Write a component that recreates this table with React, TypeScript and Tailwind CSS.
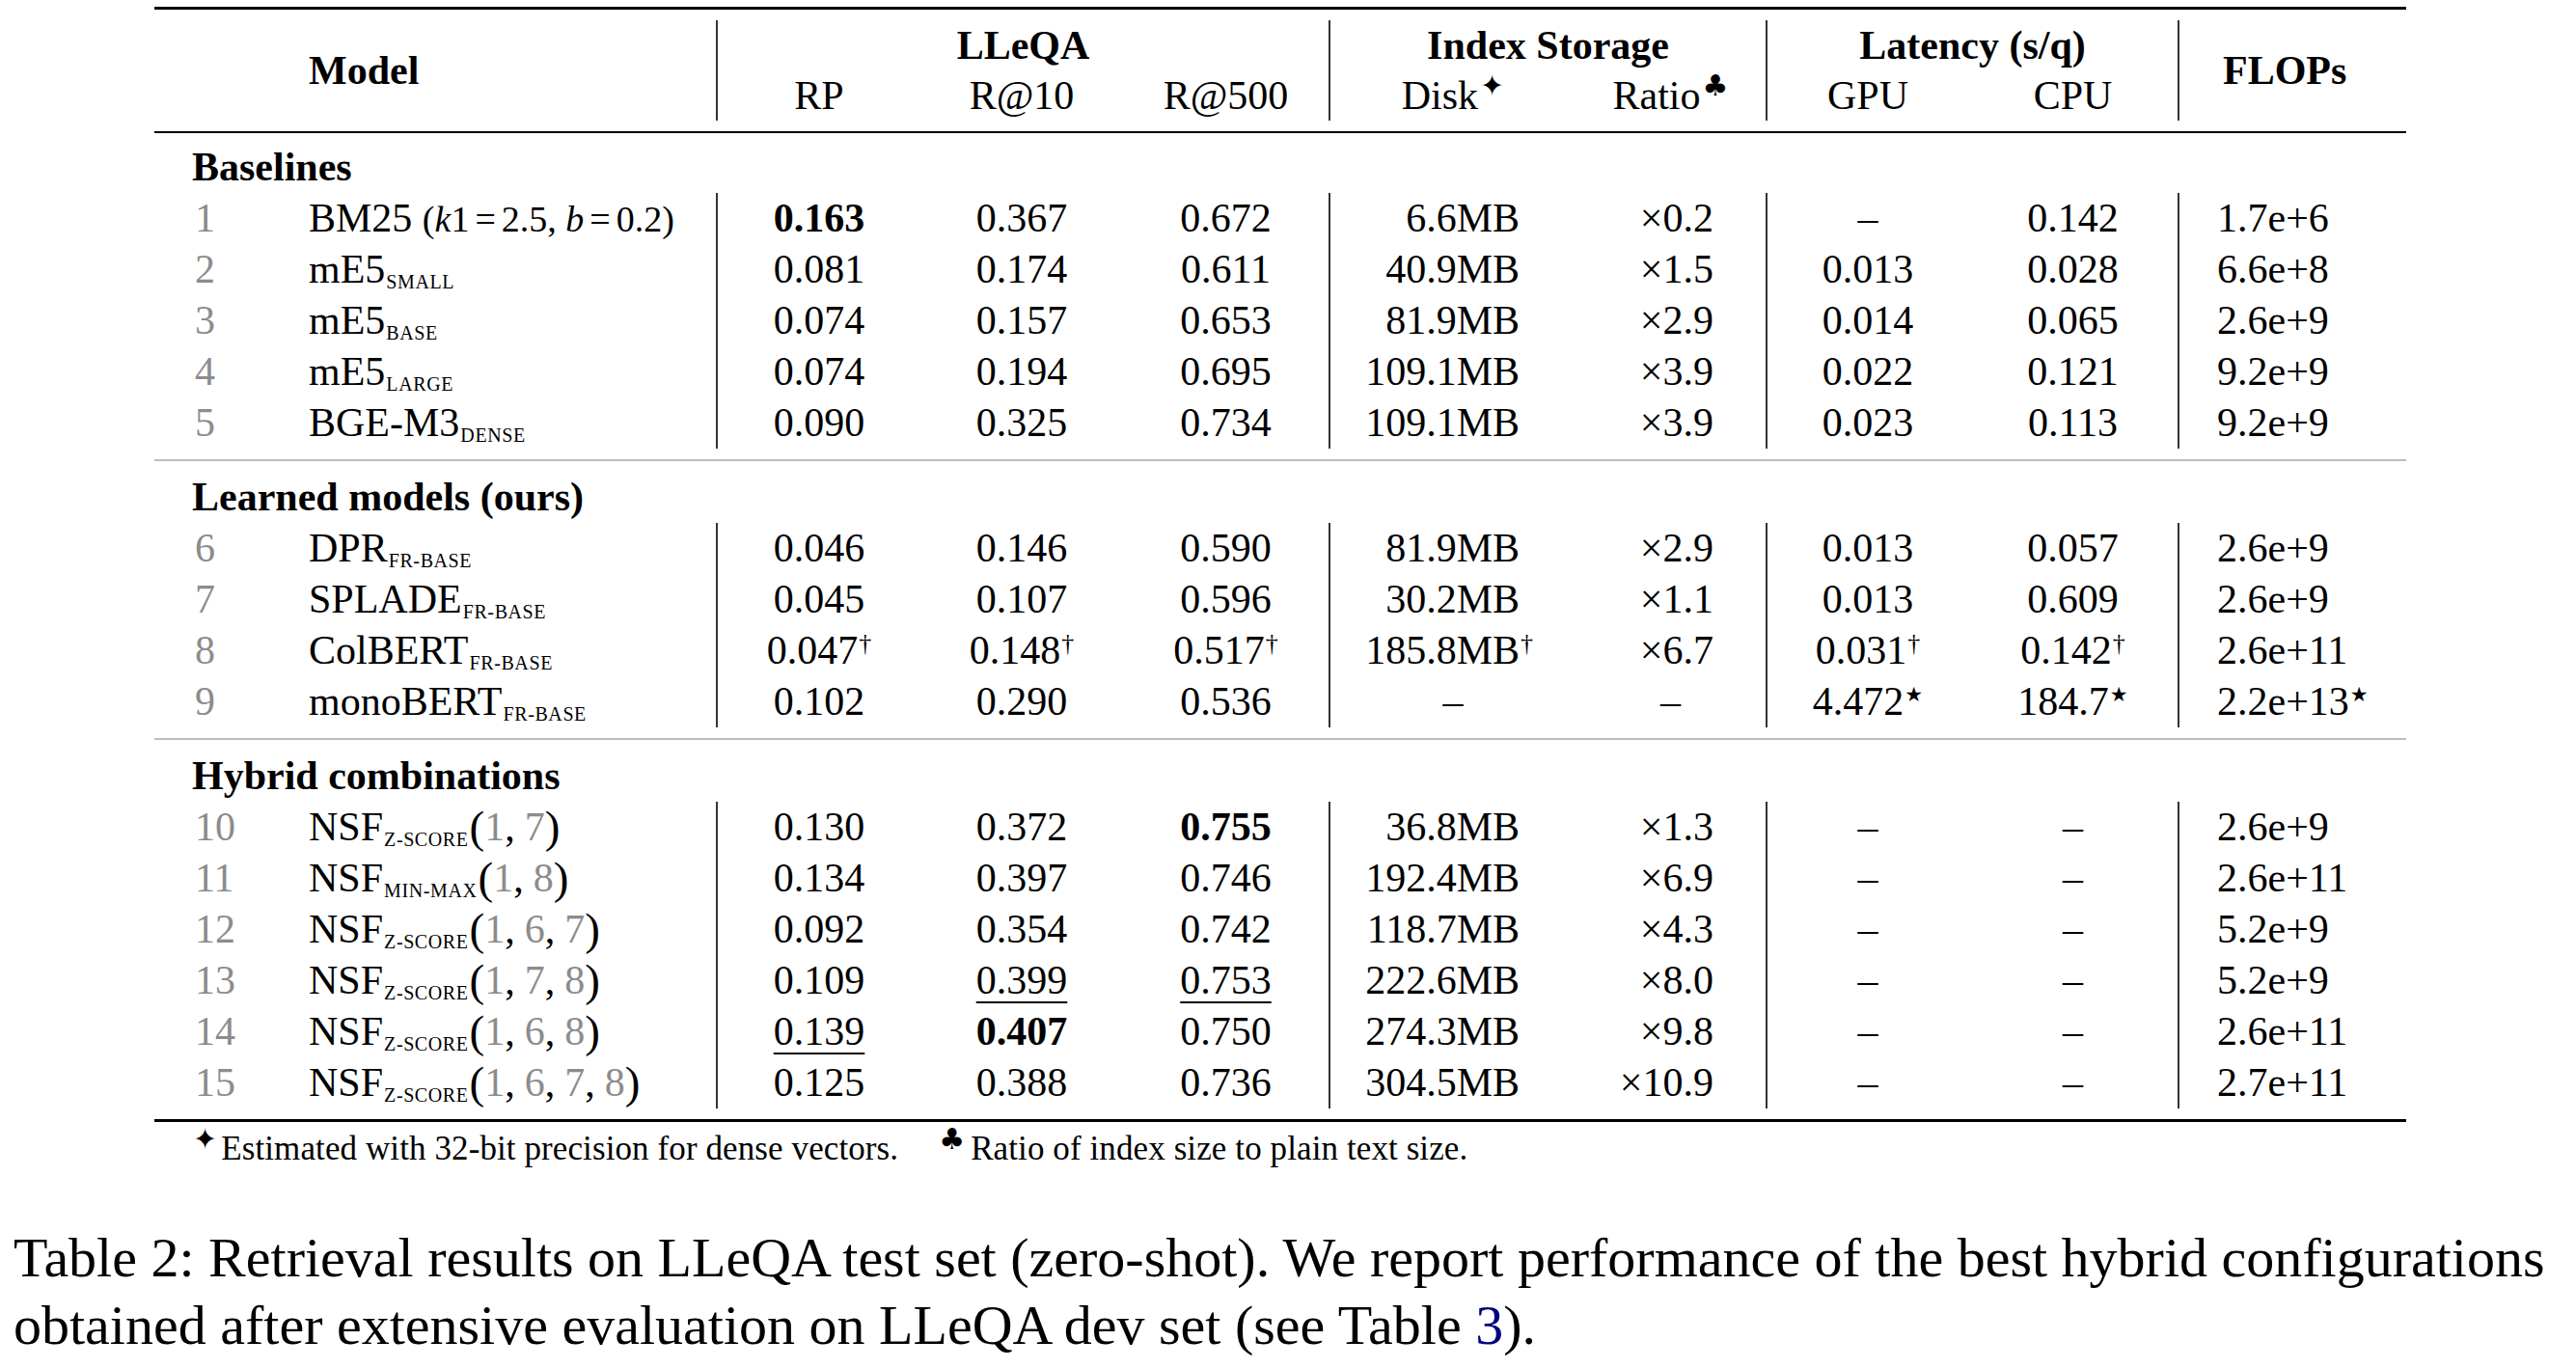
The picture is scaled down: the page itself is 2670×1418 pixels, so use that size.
import React from 'react'

const GRID = 'grid grid-cols-[582px_212px_210px_213px_256px_197px_210px_217px_237px]'
const VL = 'border-l-2 border-[#333]'

const Sub = ({ children }: { children: React.ReactNode }) => (
  <span className="relative top-[6px] text-[20px] leading-none tracking-[0.6px] ml-[1px]">{children}</span>
)

const Sym = ({ children, className = '' }: { children: React.ReactNode; className?: string }) => (
  <span className={`relative font-['DejaVu_Sans'] text-[30px] leading-none ${className}`}>{children}</span>
)

const Star = () => (
  <span className="relative -top-[14px] ml-[1px] font-['DejaVu_Sans'] text-[21px] leading-none">★</span>
)

const Args = ({ nums }: { nums: string[] }) => (
  <span className="ml-[1px]">
    <span className="text-[47px] leading-none relative top-[2px]">(</span>
    {nums.map((n, i) => (
      <React.Fragment key={i}>
        {i > 0 && <span className="mr-[10px]">,</span>}
        <span className="text-[#8c8c8c]">{n}</span>
      </React.Fragment>
    ))}
    <span className="text-[47px] leading-none relative top-[2px]">)</span>
  </span>
)

const Num = ({ s, hang = false }: { s: string; hang?: boolean }) => {
  const bold = s.startsWith('!')
  const under = s.startsWith('_')
  let t = bold || under ? s.slice(1) : s
  const dag = t.endsWith('†')
  const star = t.endsWith('⋆')
  if (dag || star) t = t.slice(0, -1)
  return (
    <span className={`relative ${bold ? 'font-bold' : ''} ${under ? 'underline decoration-2 underline-offset-8' : ''}`}>
      {t}
      {dag && !hang && <sup className="text-[26px] ml-[1px]">†</sup>}
      {dag && hang && <span className="absolute left-full top-[3px] text-[26px] leading-none ml-[1px]">†</span>}
      {star && <Star />}
    </span>
  )
}

type Row = { n: number; model: React.ReactNode; vals: string[] }

const baselines: Row[] = [
  {
    n: 1,
    model: (
      <>
        BM25{' '}
        <span className="text-[38px]">
          (<i>k</i>1<span className="mx-[6px]">=</span>2.5, <i>b</i>
          <span className="mx-[6px]">=</span>0.2)
        </span>
      </>
    ),
    vals: ['!0.163', '0.367', '0.672', '6.6MB', '×0.2', '–', '0.142', '1.7e+6'],
  },
  { n: 2, model: <>mE5<Sub>SMALL</Sub></>, vals: ['0.081', '0.174', '0.611', '40.9MB', '×1.5', '0.013', '0.028', '6.6e+8'] },
  { n: 3, model: <>mE5<Sub>BASE</Sub></>, vals: ['0.074', '0.157', '0.653', '81.9MB', '×2.9', '0.014', '0.065', '2.6e+9'] },
  { n: 4, model: <>mE5<Sub>LARGE</Sub></>, vals: ['0.074', '0.194', '0.695', '109.1MB', '×3.9', '0.022', '0.121', '9.2e+9'] },
  { n: 5, model: <>BGE-M3<Sub>DENSE</Sub></>, vals: ['0.090', '0.325', '0.734', '109.1MB', '×3.9', '0.023', '0.113', '9.2e+9'] },
]

const learned: Row[] = [
  { n: 6, model: <>DPR<Sub>FR-BASE</Sub></>, vals: ['0.046', '0.146', '0.590', '81.9MB', '×2.9', '0.013', '0.057', '2.6e+9'] },
  { n: 7, model: <>SPLADE<Sub>FR-BASE</Sub></>, vals: ['0.045', '0.107', '0.596', '30.2MB', '×1.1', '0.013', '0.609', '2.6e+9'] },
  { n: 8, model: <>ColBERT<Sub>FR-BASE</Sub></>, vals: ['0.047†', '0.148†', '0.517†', '185.8MB†', '×6.7', '0.031†', '0.142†', '2.6e+11'] },
  { n: 9, model: <>monoBERT<Sub>FR-BASE</Sub></>, vals: ['0.102', '0.290', '0.536', '–', '–', '4.472⋆', '184.7⋆', '2.2e+13⋆'] },
]

const hybrid: Row[] = [
  { n: 10, model: <>NSF<Sub>Z-SCORE</Sub><Args nums={['1', '7']} /></>, vals: ['0.130', '0.372', '!0.755', '36.8MB', '×1.3', '–', '–', '2.6e+9'] },
  { n: 11, model: <>NSF<Sub>MIN-MAX</Sub><Args nums={['1', '8']} /></>, vals: ['0.134', '0.397', '0.746', '192.4MB', '×6.9', '–', '–', '2.6e+11'] },
  { n: 12, model: <>NSF<Sub>Z-SCORE</Sub><Args nums={['1', '6', '7']} /></>, vals: ['0.092', '0.354', '0.742', '118.7MB', '×4.3', '–', '–', '5.2e+9'] },
  { n: 13, model: <>NSF<Sub>Z-SCORE</Sub><Args nums={['1', '7', '8']} /></>, vals: ['0.109', '_0.399', '_0.753', '222.6MB', '×8.0', '–', '–', '5.2e+9'] },
  { n: 14, model: <>NSF<Sub>Z-SCORE</Sub><Args nums={['1', '6', '8']} /></>, vals: ['_0.139', '!0.407', '0.750', '274.3MB', '×9.8', '–', '–', '2.6e+11'] },
  { n: 15, model: <>NSF<Sub>Z-SCORE</Sub><Args nums={['1', '6', '7', '8']} /></>, vals: ['0.125', '0.388', '0.736', '304.5MB', '×10.9', '–', '–', '2.7e+11'] },
]

const DataRow = ({ row }: { row: Row }) => {
  const [rp, r10, r500, disk, ratio, gpu, cpu, flops] = row.vals
  return (
    <div className={`${GRID} h-[53px] leading-[53px]`}>
      <div className="whitespace-nowrap">
        <span className="inline-block w-[160px] pl-[42px] text-[#8c8c8c]">{row.n}</span>
        {row.model}
      </div>
      <div className={`${VL} text-center`}><Num s={rp} /></div>
      <div className="text-center"><Num s={r10} /></div>
      <div className="text-center"><Num s={r500} /></div>
      <div className={`${VL} ${disk === '–' ? 'text-center' : 'text-right pr-[58px]'}`}><Num s={disk} hang /></div>
      <div className={ratio === '–' ? 'text-center' : 'text-right pr-[54px]'}><Num s={ratio} /></div>
      <div className={`${VL} text-center`}><Num s={gpu} /></div>
      <div className="text-center"><Num s={cpu} /></div>
      <div className={`${VL} pl-[39px] whitespace-nowrap`}><Num s={flops} /></div>
    </div>
  )
}

const Section = ({ title, rows }: { title: string; rows: Row[] }) => (
  <div>
    <div className="h-[53px] leading-[53px] font-bold pl-[39px]">{title}</div>
    {rows.map((r) => (
      <DataRow key={r.n} row={r} />
    ))}
  </div>
)

const MidRule = () => <div className="my-[11px] h-[2px] bg-[#bdbdbd]" />

export default function App() {
  return (
    <div className="w-[2670px] h-[1418px] bg-white text-black overflow-hidden font-['Liberation_Serif','Times_New_Roman',serif]">
      <div className="ml-[160px] w-[2334px] pt-[7px] text-[42px]">
        <div className="h-[3px] bg-black" />

        <div className={`${GRID} grid-rows-[52px_52px] my-[11px] leading-[52px]`}>
          <div className="row-span-2 flex items-center pl-[160px] font-bold">Model</div>
          <div className={`col-span-3 ${VL} text-center font-bold`}>LLeQA</div>
          <div className={`col-span-2 ${VL} text-center font-bold`}>Index Storage</div>
          <div className={`col-span-2 ${VL} text-center font-bold`}>Latency (s/q)</div>
          <div className={`row-span-2 ${VL} flex items-center pl-[45px] font-bold`}>FLOPs</div>
          <div className={`${VL} text-center`}>RP</div>
          <div className="text-center">R@10</div>
          <div className="text-center">R@500</div>
          <div className={`${VL} text-center`}>Disk<Sym className="-top-[14px] ml-[2px]">✦</Sym></div>
          <div className="text-center">Ratio<Sym className="-top-[14px] ml-[2px]">♣</Sym></div>
          <div className={`${VL} text-center`}>GPU</div>
          <div className="text-center">CPU</div>
        </div>

        <div className="h-[2px] bg-black mb-[9px]" />

        <Section title="Baselines" rows={baselines} />
        <MidRule />
        <Section title="Learned models (ours)" rows={learned} />
        <MidRule />
        <Section title="Hybrid combinations" rows={hybrid} />

        <div className="mt-[11px] h-[3px] bg-black" />

        <div className="mt-[8px] pl-[40px] text-[35px] leading-[40px] whitespace-nowrap tracking-[0.1px]">
          <Sym className="-top-[11px] mr-[4px] text-[26px]">✦</Sym>
          Estimated with 32-bit precision for dense vectors.
          <span className="inline-block w-[42px]" />
          <Sym className="-top-[11px] mr-[6px] text-[26px]">♣</Sym>
          Ratio of index size to plain text size.
        </div>
      </div>

      <div className="mt-[58px] pl-[14px] text-[58px] leading-[70px] whitespace-nowrap">
        Table 2: Retrieval results on LLeQA test set (zero-shot). We report performance of the best hybrid configurations
        <br />
        obtained after extensive evaluation on LLeQA dev set (see Table <span className="text-[#000080]">3</span>).
      </div>
    </div>
  )
}
